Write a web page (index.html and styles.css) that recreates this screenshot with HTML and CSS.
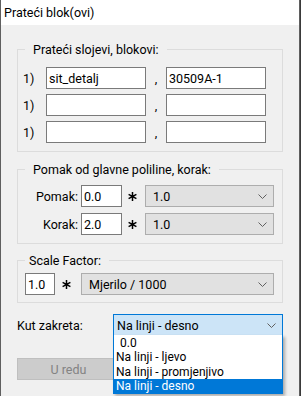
FILE: index.html
```html
<!DOCTYPE html>
<html lang="hr">
<head>
    <meta charset="UTF-8">
    <title>Prateći blok(ovi)</title>
    <link rel="stylesheet" href="styles.css">
</head>
<body>
    <div class="window">
        <div class="titlebar">Prateći blok(ovi)</div>

        <div class="content">
            <fieldset class="group group-layers">
                <legend class="wide">Prateći slojevi, blokovi:</legend>
                <div class="layer-row">
                    <span class="num">1)</span>
                    <input class="field field-layer" value="sit_detalj">
                    <span class="comma">,</span>
                    <input class="field field-layer" value="30509A-1">
                </div>
                <div class="layer-row">
                    <span class="num">1)</span>
                    <input class="field field-layer" value="">
                    <span class="comma">,</span>
                    <input class="field field-layer" value="">
                </div>
                <div class="layer-row">
                    <span class="num">1)</span>
                    <input class="field field-layer" value="">
                    <span class="comma">,</span>
                    <input class="field field-layer" value="">
                </div>
            </fieldset>

            <fieldset class="group group-offset">
                <legend class="wide">Pomak od glavne poliline, korak:</legend>
                <div class="offset-row">
                    <label class="offset-label">Pomak:</label>
                    <input class="field field-short" value="0.0">
                    <svg class="star" width="9" height="9" viewBox="0 0 9 9"><path d="M4.5 0V9M0.6 2.3L8.4 6.7M0.6 6.7L8.4 2.3"/></svg>
                    <div class="combo combo-offset">
                        <span class="combo-text">1.0</span>
                        <svg class="chevron" width="9" height="5" viewBox="0 0 9 5"><path d="M0.5 0.5L4.5 4.5L8.5 0.5"/></svg>
                    </div>
                </div>
                <div class="offset-row">
                    <label class="offset-label">Korak:</label>
                    <input class="field field-short" value="2.0">
                    <svg class="star" width="9" height="9" viewBox="0 0 9 9"><path d="M4.5 0V9M0.6 2.3L8.4 6.7M0.6 6.7L8.4 2.3"/></svg>
                    <div class="combo combo-offset">
                        <span class="combo-text">1.0</span>
                        <svg class="chevron" width="9" height="5" viewBox="0 0 9 5"><path d="M0.5 0.5L4.5 4.5L8.5 0.5"/></svg>
                    </div>
                </div>
            </fieldset>

            <fieldset class="group group-scale">
                <legend>Scale Factor:</legend>
                <div class="scale-row">
                    <input class="field field-scale" value="1.0">
                    <svg class="star" width="9" height="9" viewBox="0 0 9 9"><path d="M4.5 0V9M0.6 2.3L8.4 6.7M0.6 6.7L8.4 2.3"/></svg>
                    <div class="combo combo-scale">
                        <span class="combo-text">Mjerilo / 1000</span>
                        <svg class="chevron" width="9" height="5" viewBox="0 0 9 5"><path d="M0.5 0.5L4.5 4.5L8.5 0.5"/></svg>
                    </div>
                </div>
            </fieldset>

            <div class="angle-row">
                <label class="angle-label">Kut zakreta:</label>
                <div class="combo combo-angle is-open">
                    <span class="combo-text">Na linji - desno</span>
                    <svg class="chevron" width="9" height="5" viewBox="0 0 9 5"><path d="M0.5 0.5L4.5 4.5L8.5 0.5"/></svg>
                    <ul class="combo-list">
                        <li class="indent">0.0</li>
                        <li>Na linji - ljevo</li>
                        <li>Na linji - promjenjivo</li>
                        <li class="selected">Na linji - desno</li>
                    </ul>
                </div>
            </div>

            <div class="buttons">
                <button class="btn" disabled>U redu</button>
            </div>
        </div>
    </div>
</body>
</html>
```

FILE: styles.css
```css
/* Windows style dialog */
html, body {
    margin: 0;
    padding: 0;
}

body {
    font-family: Roboto, "Noto Sans", sans-serif;
    font-size: 12.5px;
    color: #000;
    background-color: #3a3a3a;
    width: 301px;
    height: 396px;
    overflow: hidden;
}

.window {
    width: 298px;
    height: 396px;
    background-color: #f0f0f0;
    border-left: 1px solid #5f5f5f;
    border-right: 1px solid #5f5f5f;
}

.titlebar {
    height: 25px;
    line-height: 25px;
    padding-left: 3px;
    background-color: #fff;
}

.content {
    padding: 0 16px;
}

/* group boxes */
.group {
    margin: 0;
    padding: 0;
    border: 1px solid #dcdcdc;
    min-width: 0;
}

.group legend {
    margin-left: 7px;
    padding: 0 8px 0 4px;
    line-height: 15px;
}

.group legend.wide {
    padding-left: 8px;
}

.group-layers {
    margin-top: 17px;
    padding-top: 10px;
    padding-bottom: 8px;
}

.group-offset {
    margin-top: 10px;
    padding-top: 8px;
    padding-bottom: 8px;
}

.group-scale {
    margin-top: 9px;
    padding-top: 5px;
    padding-bottom: 7px;
}

/* inputs */
.field {
    box-sizing: border-box;
    height: 22px;
    margin: 0;
    padding: 0 2px;
    border: 1px solid #7a7a7a;
    background-color: #fff;
    font-family: inherit;
    font-size: inherit;
    color: #000;
    outline: none;
}

.layer-row {
    display: flex;
    align-items: center;
}

.layer-row + .layer-row {
    margin-top: 5px;
}

.num {
    width: 23px;
    padding-left: 5px;
}

.field-layer {
    width: 100px;
}

.comma {
    width: 20px;
    text-align: center;
}

.offset-row {
    display: flex;
    align-items: center;
}

.offset-row + .offset-row {
    margin-top: 6px;
}

.offset-label {
    width: 60px;
    margin-right: 3px;
    text-align: right;
}

.field-short {
    width: 41px;
}

.star {
    flex: none;
    margin-left: 6px;
    margin-right: 8px;
}

.star path {
    stroke: #000;
    stroke-width: 1.5;
    fill: none;
}

.scale-row {
    display: flex;
    align-items: center;
    padding-left: 7px;
}

.field-scale {
    width: 30px;
}

.scale-row .star {
    margin-left: 7px;
    margin-right: 10px;
}

/* combo boxes */
.combo {
    box-sizing: border-box;
    height: 22px;
    display: flex;
    align-items: center;
    justify-content: space-between;
    padding: 0 6px 0 7px;
    border: 1px solid #adadad;
    background-color: #e1e1e1;
    position: relative;
}

.chevron path {
    stroke: #606060;
    stroke-width: 1;
    fill: none;
}

.combo-offset {
    width: 129px;
}

.combo-scale {
    width: 193px;
}

.angle-row {
    display: flex;
    align-items: center;
    justify-content: space-between;
    margin-top: 11px;
}

.combo-angle {
    width: 170px;
    padding-left: 3px;
}

.combo-angle.is-open {
    border-color: #0078d7;
    background-color: #cce4f7;
}

.combo-list {
    position: absolute;
    top: 100%;
    left: -1px;
    width: 170px;
    box-sizing: border-box;
    margin: 0;
    padding: 1px 0 0;
    list-style: none;
    font-size: 12px;
    background-color: #fff;
    border: 1px solid #0078d7;
    border-top: none;
    box-shadow: 2px 2px 3px rgba(0, 0, 0, 0.3);
    z-index: 2;
}

.combo-list li {
    height: 14.33px;
    line-height: 14.33px;
    padding-left: 2px;
}

.combo-list li.indent {
    padding-left: 6px;
}

.combo-list li.selected {
    background-color: #0078d7;
    color: #fff;
}

/* buttons */
.buttons {
    margin-top: 22px;
}

.btn {
    width: 103px;
    height: 22px;
    margin: 0;
    padding: 0;
    border: 1px solid #bfbfbf;
    background-color: #cccccc;
    color: #838383;
    font-family: inherit;
    font-size: inherit;
}
```
